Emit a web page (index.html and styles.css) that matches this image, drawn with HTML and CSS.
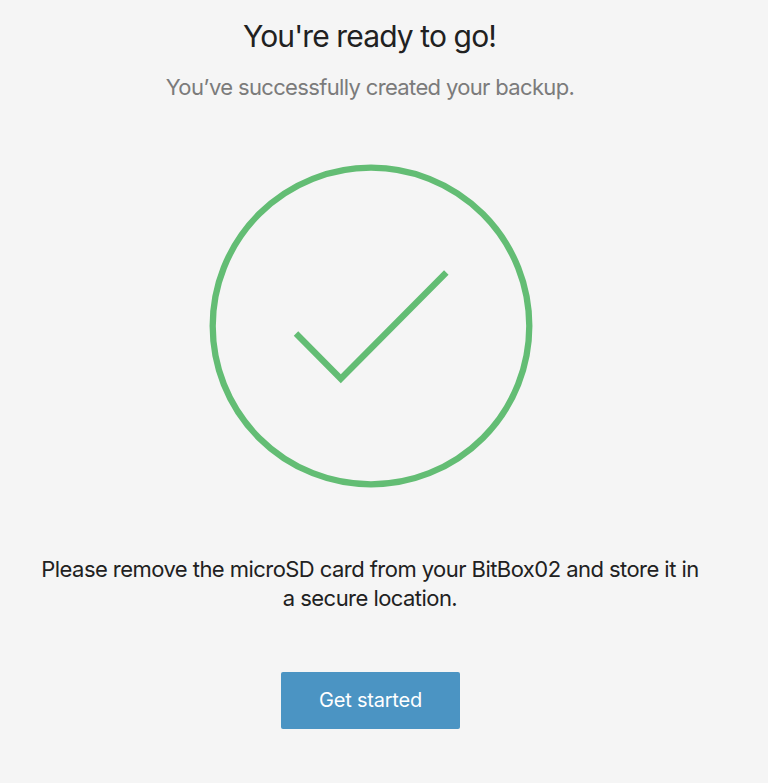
FILE: index.html
```html
<!DOCTYPE html>
<html lang="en">
<head>
<meta charset="utf-8">
<title>Backup created</title>
<link rel="stylesheet" href="styles.css">
</head>
<body>
<main class="view">
  <h1 class="title">You're ready to go!</h1>
  <p class="subtitle">You’ve successfully created your backup.</p>
  <svg class="check" viewBox="0 0 324 324" aria-hidden="true">
    <circle cx="162" cy="162" r="158.3"/>
    <path d="M87 169.500L131.800 214.800L237.300 108.500"/>
  </svg>
  <p class="message">Please remove the microSD card from your BitBox02 and store it in<br>a secure location.</p>
  <button class="button" type="button">Get started</button>
</main>
</body>
</html>
```
FILE: styles.css
```css
body {
  margin: 0;
  background: #f5f5f5;
  color: #212121;
  font-family: Inter, "Liberation Sans", sans-serif;
}

.view {
  box-sizing: border-box;
  width: 741px;
  height: 783px;
  padding-top: 16px;
  display: flex;
  flex-direction: column;
  align-items: center;
  text-align: center;
  white-space: nowrap;
}

.title {
  margin: 0;
  padding-right: 2px;
  font-size: 30px;
  font-weight: 400;
  line-height: 40px;
  letter-spacing: -0.88px;
}

.subtitle {
  margin: 16px 0 0;
  padding-right: 1px;
  font-size: 22px;
  line-height: 30px;
  letter-spacing: -0.65px;
  color: #7b7b7b;
}

.check {
  width: 324px;
  height: 324px;
  margin-top: 62px;
  fill: none;
  stroke: #63bd74;
  stroke-width: 6.3;
}

.message {
  margin: 67px 0 0;
  padding-right: 1px;
  font-size: 22px;
  line-height: 29px;
  letter-spacing: -0.55px;
}

.button {
  width: 179px;
  height: 57px;
  margin-top: 59px;
  padding: 0;
  border: 0;
  border-radius: 2px;
  background: #4b94c3;
  color: #fff;
  font: 400 20px/57px Inter, "Liberation Sans", sans-serif;
  letter-spacing: -0.2px;
}
```
